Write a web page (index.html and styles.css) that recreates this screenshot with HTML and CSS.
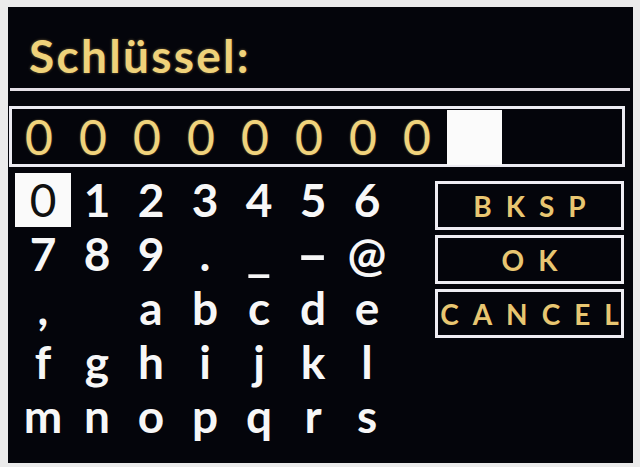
FILE: index.html
```html
<!DOCTYPE html>
<html lang="de">
<head>
<meta charset="utf-8">
<title>Schlüssel</title>
<link rel="stylesheet" href="styles.css">
</head>
<body>
<div class="screen">
  <div class="title">Schlüssel:</div>
  <div class="sep"></div>
  <div class="entry">
    <span class="digit">0</span><span class="digit">0</span><span class="digit">0</span><span class="digit">0</span><span class="digit">0</span><span class="digit">0</span><span class="digit">0</span><span class="digit">0</span><span class="cursor"></span>
  </div>
  <div class="keypad">
    <div class="keys">
      <span class="key selected">0</span><span class="key">1</span><span class="key">2</span><span class="key">3</span><span class="key">4</span><span class="key">5</span><span class="key">6</span>
      <span class="key">7</span><span class="key">8</span><span class="key">9</span><span class="key">.</span><span class="key"><span class="under">_</span></span><span class="key"><span class="dash">-</span></span><span class="key">@</span>
      <span class="key">,</span><span class="key"> </span><span class="key">a</span><span class="key">b</span><span class="key">c</span><span class="key">d</span><span class="key">e</span>
      <span class="key">f</span><span class="key">g</span><span class="key">h</span><span class="key">i</span><span class="key">j</span><span class="key">k</span><span class="key">l</span>
      <span class="key">m</span><span class="key">n</span><span class="key">o</span><span class="key">p</span><span class="key">q</span><span class="key">r</span><span class="key">s</span>
    </div>
    <div class="actions">
      <div class="btn">BKSP</div>
      <div class="btn">OK</div>
      <div class="btn">CANCEL</div>
    </div>
  </div>
</div>
</body>
</html>
```

FILE: styles.css
```css
html, body {
  margin: 0;
  padding: 0;
}
body {
  background: #ebebeb;
  width: 640px;
  height: 467px;
  overflow: hidden;
  font-family: Lato, "Open Sans", sans-serif;
}
.screen {
  margin: 7px 7px 0 8px;
  height: 456px;
  background: #04050b;
  overflow: hidden;
}
.title {
  height: 55px;
  padding: 26px 0 0 21px;
  font-size: 46px;
  line-height: 46px;
  font-weight: 700;
  color: #efd27a;
  letter-spacing: 2.3px;
  text-shadow: 0 0 3px rgba(240, 200, 110, 0.45);
}
.sep {
  height: 3px;
  margin: 0 3px 0 2px;
  background: #e4dfe6;
}
.entry {
  margin: 15px 0 0 1px;
  width: 610px;
  height: 55px;
  border: 3px solid #ecebf2;
  display: flex;
  align-items: flex-start;
}
.digit {
  width: 54px;
  height: 55px;
  text-align: center;
  font-size: 48px;
  line-height: 55px;
  font-weight: 400;
  color: #f0d37c;
  text-shadow: 0 0 2px rgba(240, 200, 110, 0.5);
}
.cursor {
  width: 55px;
  height: 55px;
  margin: 1px 0 0 3px;
  background: #fbfbfb;
}
.keypad {
  display: flex;
  align-items: flex-start;
  margin-top: 6px;
}
.keys {
  margin-left: 8px;
  display: grid;
  grid-template-columns: repeat(7, 54px);
  grid-auto-rows: 54px;
}
.key {
  text-align: center;
  font-size: 46px;
  line-height: 54px;
  font-weight: 700;
  color: #f7f7f7;
  white-space: pre;
}
.key.selected {
  background: #fafafa;
  color: #111;
  font-weight: 400;
  margin-left: -1px;
  margin-right: -1px;
}
.dash {
  display: inline-block;
  transform: translateY(1px) scaleX(1.9);
}
.under {
  display: inline-block;
  line-height: 40px;
  transform: scaleX(1.15);
}
.actions {
  margin: 8px 0 0 41px;
  width: 189px;
  display: flex;
  flex-direction: column;
  gap: 5px;
}
.btn {
  box-sizing: border-box;
  height: 49px;
  border: 3px solid #eeedf3;
  display: flex;
  align-items: center;
  justify-content: center;
  padding-left: 14px;
  font-size: 28px;
  font-weight: 700;
  letter-spacing: 14px;
  color: #e8c671;
}
```
